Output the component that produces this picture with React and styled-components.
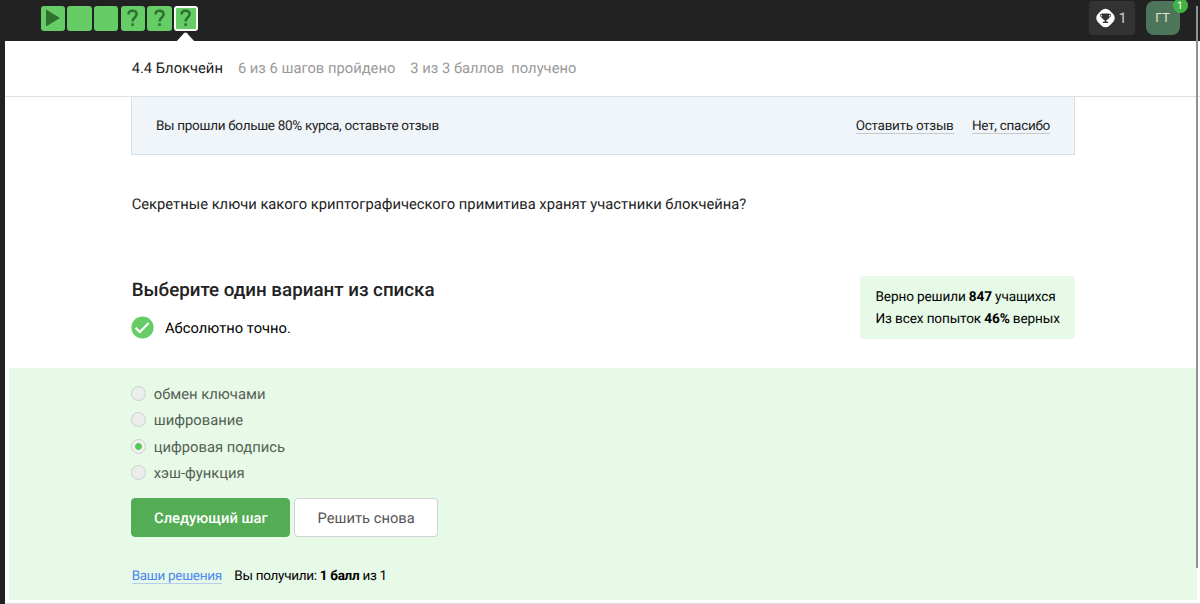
import React from "react";
import styled, { createGlobalStyle } from "styled-components";

const GlobalStyle = createGlobalStyle`
  * { box-sizing: border-box; }
  body { margin: 0; background: #222; font-family: Roboto, "Noto Sans", sans-serif; color: #222; text-rendering: geometricPrecision; }
`;

const Page = styled.div`
  position: relative;
  height: 604px;
  overflow: hidden;
  display: flex;
  flex-direction: column;
  background: #222;
`;

const TopBar = styled.header`
  height: 41px;
  flex: none;
  display: flex;
  justify-content: space-between;
  align-items: flex-start;
  padding: 0 20.5px 0 40.5px;
  background: #222;
`;

const Steps = styled.nav`
  display: flex;
  gap: 2.2px;
  padding-top: 5.5px;
`;

const Step = styled.div`
  position: relative;
  width: 24.5px;
  height: 25.5px;
  border-radius: 3px;
  background: #66cc66;
  border: ${(p) => (p.$active ? "2px solid #f4fbf2" : "0")};
  display: flex;
  align-items: center;
  justify-content: center;
`;

const Pointer = styled.svg`
  position: absolute;
  left: 0.5px;
  top: 24.5px;
  width: 19px;
  height: 10px;
`;

const UserArea = styled.div`
  display: flex;
  gap: 11px;
`;

const Trophy = styled.div`
  width: 46px;
  height: 34px;
  margin-top: 1px;
  border-radius: 4px;
  background: #333;
  color: #ccc;
  font-size: 14.7px;
  display: flex;
  align-items: center;
  padding-left: 7px;
  gap: 4px;

  svg {
    flex: none;
  }
`;

const Avatar = styled.div`
  position: relative;
  width: 34px;
  height: 34px;
  margin-top: 1px;
  border-radius: 8px;
  background: #4d7559;
  color: #e3e5d4;
  font-size: 12.5px;
  line-height: 14px;
  padding-top: 1px;
  display: flex;
  align-items: center;
  justify-content: center;
`;

const Badge = styled.span`
  position: absolute;
  right: -8px;
  top: -3px;
  width: 15px;
  height: 15px;
  border-radius: 50%;
  background: #43b244;
  color: #fff;
  font-size: 10.5px;
  line-height: 16px;
  text-align: center;
`;

const Sheet = styled.main`
  flex: 1;
  margin-left: 5px;
  background: #fff;
  display: flex;
  flex-direction: column;
`;

const LessonHeader = styled.div`
  height: 56px;
  flex: none;
  border-bottom: 1px solid #dde1e3;
  display: flex;
  align-items: center;
  padding: 0 0 1px 126.7px;
  font-size: 14.75px;
  color: #999;
`;

const Label = styled.span`
  display: inline-block;
  white-space: pre;
  letter-spacing: ${(p) => p.$track || 0}px;
  margin-left: ${(p) => p.$left || 0}px;
  color: ${(p) => p.$color || "inherit"};
`;

const Column = styled.section`
  width: 944px;
  margin-left: 126px;
`;

const Notice = styled(Column)`
  height: 58px;
  flex: none;
  display: flex;
  align-items: center;
  padding: 1px 24px 0;
  border: 1px solid #d8e2e5;
  border-top: 0;
  background: #f0f5fa;
  font-size: 13.5px;
`;

const NoticeLinks = styled.div`
  margin-left: auto;
  display: flex;
  gap: 18.5px;
`;

const TextLink = styled.a`
  padding-top: 1px;
  line-height: 14px;
  white-space: pre;
  letter-spacing: -0.29px;
  color: ${(p) => p.$color || "#222"};
  border-bottom: 1px solid ${(p) => p.$line || "#c4c9ce"};
`;

const Question = styled(Column)`
  padding: 39px 0 0 0.7px;
  height: 121px;
  flex: none;
  font-size: 14.75px;
  line-height: 20px;
`;

const TaskHead = styled(Column)`
  height: 92px;
  flex: none;
  display: flex;
  justify-content: space-between;
  align-items: flex-start;
`;

const Title = styled.h2`
  margin: 2px 0 0 0.7px;
  font-size: 18.75px;
  font-weight: 500;
  line-height: 25px;
`;

const Verdict = styled.div`
  display: flex;
  align-items: center;
  height: 24px;
  margin-top: 12px;
  gap: 11px;
  font-size: 14.73px;
  color: #000;

  span {
    padding-top: 1px;
  }
`;

const Stats = styled.div`
  width: 215px;
  height: 63px;
  border-radius: 4px;
  padding: 10px 0 0 15.5px;
  background: #e7f9e7;
  color: #000;
  font-size: 13.6px;
  line-height: 22px;
`;

const Answer = styled.section`
  height: 232px;
  flex: none;
  margin: 0 3px 0 4px;
  padding: 12px 0 0 122.4px;
  background: #e7f9e7;
`;

const Option = styled.div`
  display: flex;
  align-items: center;
  gap: 7.3px;
  height: 26.5px;
  font-size: 14.8px;
  color: #555f55;

  span + span {
    padding-top: 0.8px;
  }
`;

const Radio = styled.span`
  width: 15px;
  height: 15px;
  border-radius: 50%;
  border: 1px solid #ccd0cc;
  background: ${(p) =>
    p.$checked ? "radial-gradient(circle, #55c858 3px, #eef2ee 3.8px)" : "#ebeeeb"};
`;

const Buttons = styled.div`
  display: flex;
  gap: 4px;
  margin-top: 12.4px;
`;

const Button = styled.button`
  width: ${(p) => p.$width}px;
  height: 39px;
  padding: 0;
  border-radius: 4px;
  border: 1px solid ${(p) => (p.$primary ? "#54ad54" : "#cfd2d6")};
  background: ${(p) => (p.$primary ? "#54ad54" : "#fff")};
  color: ${(p) => (p.$primary ? "#fff" : "#555")};
  font: ${(p) => (p.$primary ? 500 : 400)} 14.73px Roboto, "Noto Sans", sans-serif;
  text-rendering: inherit;
`;

const Footer = styled.div`
  display: flex;
  align-items: center;
  margin: 31px 0 0 0.3px;
  font-size: 13.5px;
  line-height: 15px;
  color: #000;
`;

const BottomRule = styled.div`
  margin-top: 3px;
  height: 1px;
  background: #ddd;
`;

const ScrollThumb = styled.div`
  position: absolute;
  left: 1196px;
  top: 6px;
  width: 2px;
  height: 562px;
  background: #929292;
`;

const Mark = () => (
  <svg width="14" height="18" viewBox="0 0 14 18" fill="none" stroke="#2f7030" strokeWidth="2.5">
    <path d="M2.5 5.4C2.5 2.9 4.1 1.7 6.5 1.7s4.1 1.3 4.1 3.6c0 3.1-4 3.4-4 7.1" />
    <path d="M6.6 14.3v2.6" strokeWidth="2.6" />
  </svg>
);

const Play = () => (
  <svg width="16" height="18" viewBox="0 0 16 18">
    <path d="M1 0.5 15 9 1 17.5z" fill="#2f7030" />
  </svg>
);

const icons = [<Play />, null, null, <Mark />, <Mark />, <Mark />];
const options = ["обмен ключами", "шифрование", "цифровая подпись", "хэш-функция"];

export default function App() {
  return (
    <Page>
      <GlobalStyle />
      <TopBar>
        <Steps>
          {icons.map((icon, i) => (
            <Step key={i} $active={i === 5}>
              {icon}
              {i === 5 && (
                <Pointer viewBox="0 0 19 10">
                  <path d="M0 10 8 1.2Q9.5 0 11 1.2L19 10z" fill="#fff" />
                </Pointer>
              )}
            </Step>
          ))}
        </Steps>
        <UserArea>
          <Trophy>
            <svg width="19" height="20" viewBox="0 0 19 20">
              <rect x="1.35" y="1.85" width="16.3" height="16.3" rx="5.5" transform="rotate(45 9.5 10)" fill="#fff" />
              <path d="M6 5.5h7v3.7q0 2.6-2.6 3v1.6h1.8V15H6.8v-1.2h1.8v-1.6Q6 11.8 6 9.2z" fill="#333" />
              <path d="M6 6.4H4.6v1.3q0 1.5 1.8 1.8M13 6.4h1.4v1.3q0 1.5-1.8 1.8" fill="none" stroke="#333" />
            </svg>
            1
          </Trophy>
          <Avatar>
            ГТ
            <Badge>1</Badge>
          </Avatar>
        </UserArea>
      </TopBar>
      <Sheet>
        <LessonHeader>
          <Label $color="#222">4.4 Блокчейн</Label>
          <Label $left={15}>6 из 6 шагов пройдено</Label>
          <Label $left={15}>3 из 3 баллов  получено</Label>
        </LessonHeader>
        <Notice>
          <Label $track={-0.3}>Вы прошли больше 80% курса, оставьте отзыв</Label>
          <NoticeLinks>
            <TextLink>Оставить отзыв</TextLink>
            <TextLink>Нет, спасибо</TextLink>
          </NoticeLinks>
        </Notice>
        <Question>
          <Label>Секретные ключи какого криптографического примитива хранят участники блокчейна?</Label>
        </Question>
        <TaskHead>
          <div>
            <Title>
              <Label>Выберите один вариант из списка</Label>
            </Title>
            <Verdict>
              <svg width="23" height="23" viewBox="0 0 23 23">
                <circle cx="11.5" cy="11.5" r="11.1" fill="#66cc66" />
                <path d="m4.5 11.8 4.3 4.2 8.9-9" fill="none" stroke="#fff" strokeWidth="2.2" />
              </svg>
              <Label>Абсолютно точно.</Label>
            </Verdict>
          </div>
          <Stats>
            <div><Label $track={-0.13}>Верно решили <b>847</b> учащихся</Label></div>
            <div><Label $track={-0.13}>Из всех попыток <b>46%</b> верных</Label></div>
          </Stats>
        </TaskHead>
        <Answer>
          {options.map((text, i) => (
            <Option key={text}>
              <Radio $checked={i === 2} />
              <Label>{text}</Label>
            </Option>
          ))}
          <Buttons>
            <Button $primary $width={159}><Label>Следующий шаг</Label></Button>
            <Button $width={143.5}><Label>Решить снова</Label></Button>
          </Buttons>
          <Footer>
            <TextLink $color="#4b86f0" $line="#b4cdf0">Ваши решения</TextLink>
            <Label $left={12.5} $track={-0.29}>Вы получили: <b>1 балл</b> из 1</Label>
          </Footer>
        </Answer>
        <BottomRule />
      </Sheet>
      <ScrollThumb />
    </Page>
  );
}
